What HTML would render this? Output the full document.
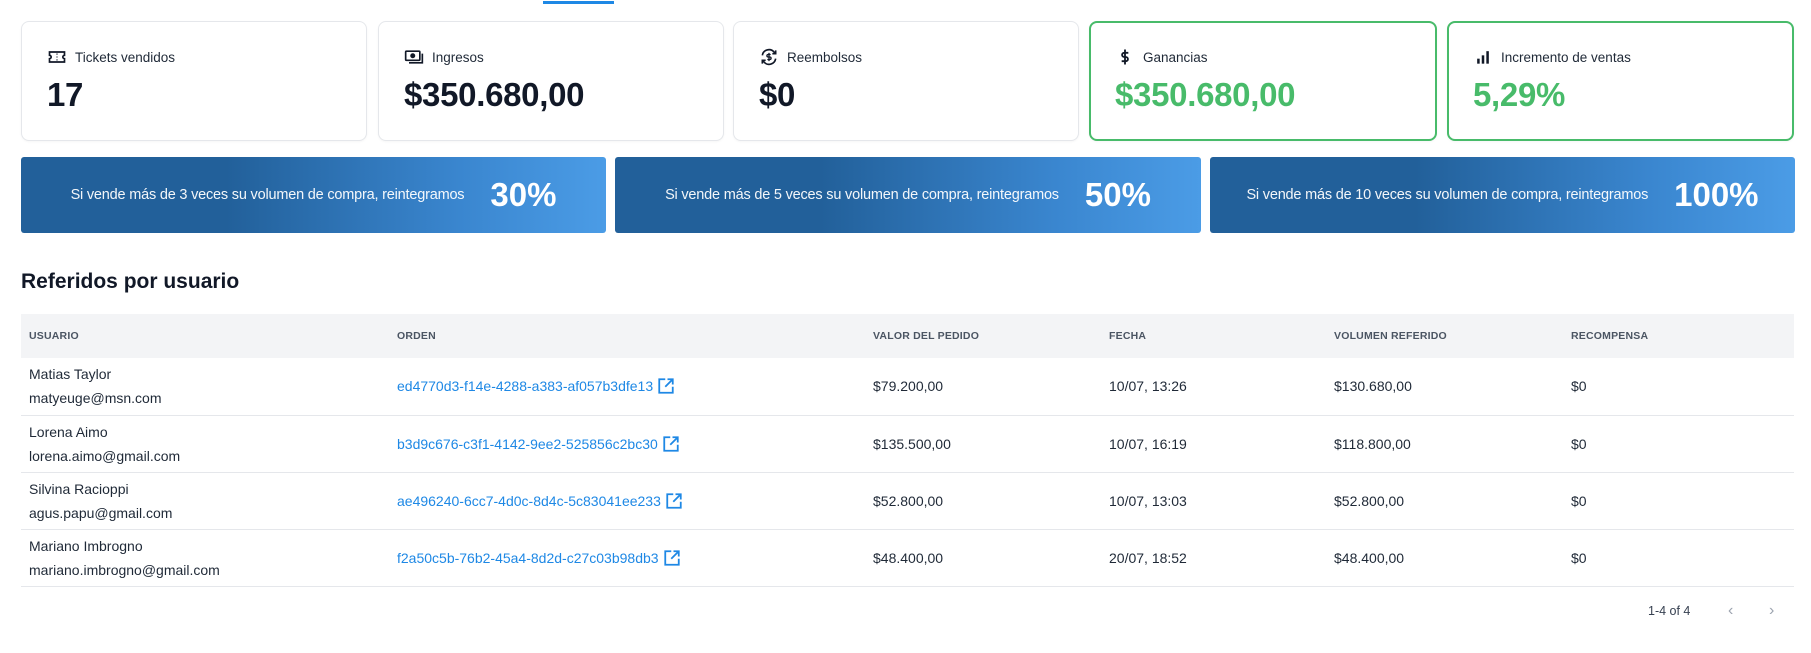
<!DOCTYPE html>
<html><head><meta charset="utf-8"><style>
*{box-sizing:border-box;margin:0;padding:0}
body{width:1811px;height:653px;background:#fff;font-family:"Liberation Sans",sans-serif;color:#111827;position:relative;overflow:hidden}
.tab{position:absolute;left:543px;top:1px;width:71px;height:3px;background:#1e88e5}
.card{position:absolute;top:21px;width:346px;height:120px;border:1px solid #e5e7eb;border-radius:8px;background:#fff;box-shadow:0 1px 2px rgba(0,0,0,.04)}
.card.g{border:2px solid #48bb6a}
.lbl{position:absolute;left:25px;top:25px;font-size:13.5px;display:flex;align-items:center;gap:8px;color:#1f2937}
.lbl svg{width:20px;height:20px}
.val{position:absolute;left:25px;top:54px;font-size:33px;font-weight:bold;letter-spacing:-.3px}
.card.g .val{color:#48bb6a;left:24px;top:53px}
.card.g .lbl{left:24px;top:24px}
.ban{position:absolute;top:157px;height:76px;border-radius:3px;background:linear-gradient(90deg,#22609a 0%,#22609a 35%,#3a86cf 75%,#4b9ce6 100%);color:#fff;display:flex;align-items:center;justify-content:center;gap:26px}
.ban span{font-size:14.5px;opacity:.95;letter-spacing:-.2px}
.ban b{font-size:33px}
h2{position:absolute;left:21px;top:270px;font-size:21px;font-weight:bold}
table{position:absolute;left:21px;top:314px;width:1773px;border-collapse:collapse}
th{background:#f3f4f6;height:44px;text-align:left;font-size:10.5px;font-weight:bold;color:#4b5563;padding-left:8px;letter-spacing:.2px}
td{height:57px;border-bottom:1px solid #e5e7eb;font-size:14px;padding-left:8px;color:#1f2937;line-height:24px}
td a{color:#1e88e5;text-decoration:none;display:inline-flex;align-items:center;gap:4px}
.pg{position:absolute;top:604px;left:1648px;font-size:12.5px;color:#374151}
.ar{position:absolute;top:602px;color:#9ca3af;font-size:16px}
</style></head><body>
<div class="tab"></div>
<div class="card" style="left:21px"><div class="lbl"><svg viewBox="0 0 24 24" fill="none" stroke="#111827" stroke-width="2"><path d="M3 6h18v4a2 2 0 0 0 0 4v4H3v-4a2 2 0 0 0 0-4z"/><path d="M12 8v1M12 11.5v1M12 15v1" /></svg>Tickets vendidos</div><div class="val">17</div></div>
<div class="card" style="left:378px"><div class="lbl"><svg viewBox="0 0 24 24" fill="none" stroke="#111827" stroke-width="2"><rect x="2" y="5" width="17" height="11" rx="1"/><circle cx="10.5" cy="10.5" r="2" fill="#111827"/><path d="M22 8v11H6"/></svg>Ingresos</div><div class="val">$350.680,00</div></div>
<div class="card" style="left:733px"><div class="lbl"><svg viewBox="0 0 24 24" fill="none" stroke="#111827" stroke-width="2"><path d="M4 10a8 8 0 0 1 14-4l2 2M20 14a8 8 0 0 1-14 4l-2-2"/><path d="M20 4v4h-4M4 20v-4h4"/><path d="M14 9h-3a1.5 1.5 0 0 0 0 3h2a1.5 1.5 0 0 1 0 3h-3M12 7v10" stroke-width="1.6"/></svg>Reembolsos</div><div class="val">$0</div></div>
<div class="card g" style="left:1089px;width:348px"><div class="lbl"><svg viewBox="0 0 24 24" fill="none" stroke="#111827" stroke-width="2.2"><path d="M16 7h-5a2.5 2.5 0 0 0 0 5h2a2.5 2.5 0 0 1 0 5H8M12 3v18"/></svg>Ganancias</div><div class="val">$350.680,00</div></div>
<div class="card g" style="left:1447px;width:347px"><div class="lbl"><svg viewBox="0 0 24 24" fill="#111827"><rect x="5" y="14" width="3" height="6"/><rect x="10.5" y="10" width="3" height="10"/><rect x="16" y="5" width="3" height="15"/></svg>Incremento de ventas</div><div class="val">5,29%</div></div>

<div class="ban" style="left:21px;width:585px"><span>Si vende más de 3 veces su volumen de compra, reintegramos</span><b>30%</b></div>
<div class="ban" style="left:615px;width:586px"><span>Si vende más de 5 veces su volumen de compra, reintegramos</span><b>50%</b></div>
<div class="ban" style="left:1210px;width:585px"><span>Si vende más de 10 veces su volumen de compra, reintegramos</span><b>100%</b></div>

<h2>Referidos por usuario</h2>
<table>
<tr><th style="width:368px">USUARIO</th><th style="width:476px">ORDEN</th><th style="width:236px">VALOR DEL PEDIDO</th><th style="width:225px">FECHA</th><th style="width:237px">VOLUMEN REFERIDO</th><th>RECOMPENSA</th></tr>
<tr><td>Matias Taylor<br>matyeuge@msn.com</td><td><a>ed4770d3-f14e-4288-a383-af057b3dfe13 <svg width="18" height="18" viewBox="0 0 24 24" fill="none" stroke="#1e88e5" stroke-width="2.4"><path d="M11 3H3v18h18v-8M14 3h7v7M21 3l-10 10"/></svg></a></td><td>$79.200,00</td><td>10/07, 13:26</td><td>$130.680,00</td><td>$0</td></tr>
<tr><td>Lorena Aimo<br>lorena.aimo@gmail.com</td><td><a>b3d9c676-c3f1-4142-9ee2-525856c2bc30 <svg width="18" height="18" viewBox="0 0 24 24" fill="none" stroke="#1e88e5" stroke-width="2.4"><path d="M11 3H3v18h18v-8M14 3h7v7M21 3l-10 10"/></svg></a></td><td>$135.500,00</td><td>10/07, 16:19</td><td>$118.800,00</td><td>$0</td></tr>
<tr><td>Silvina Racioppi<br>agus.papu@gmail.com</td><td><a>ae496240-6cc7-4d0c-8d4c-5c83041ee233 <svg width="18" height="18" viewBox="0 0 24 24" fill="none" stroke="#1e88e5" stroke-width="2.4"><path d="M11 3H3v18h18v-8M14 3h7v7M21 3l-10 10"/></svg></a></td><td>$52.800,00</td><td>10/07, 13:03</td><td>$52.800,00</td><td>$0</td></tr>
<tr><td>Mariano Imbrogno<br>mariano.imbrogno@gmail.com</td><td><a>f2a50c5b-76b2-45a4-8d2d-c27c03b98db3 <svg width="18" height="18" viewBox="0 0 24 24" fill="none" stroke="#1e88e5" stroke-width="2.4"><path d="M11 3H3v18h18v-8M14 3h7v7M21 3l-10 10"/></svg></a></td><td>$48.400,00</td><td>20/07, 18:52</td><td>$48.400,00</td><td>$0</td></tr>
</table>
<div class="pg">1-4 of 4</div>
<div class="ar" style="left:1728px">&#8249;</div>
<div class="ar" style="left:1769px">&#8250;</div>
</body></html>
